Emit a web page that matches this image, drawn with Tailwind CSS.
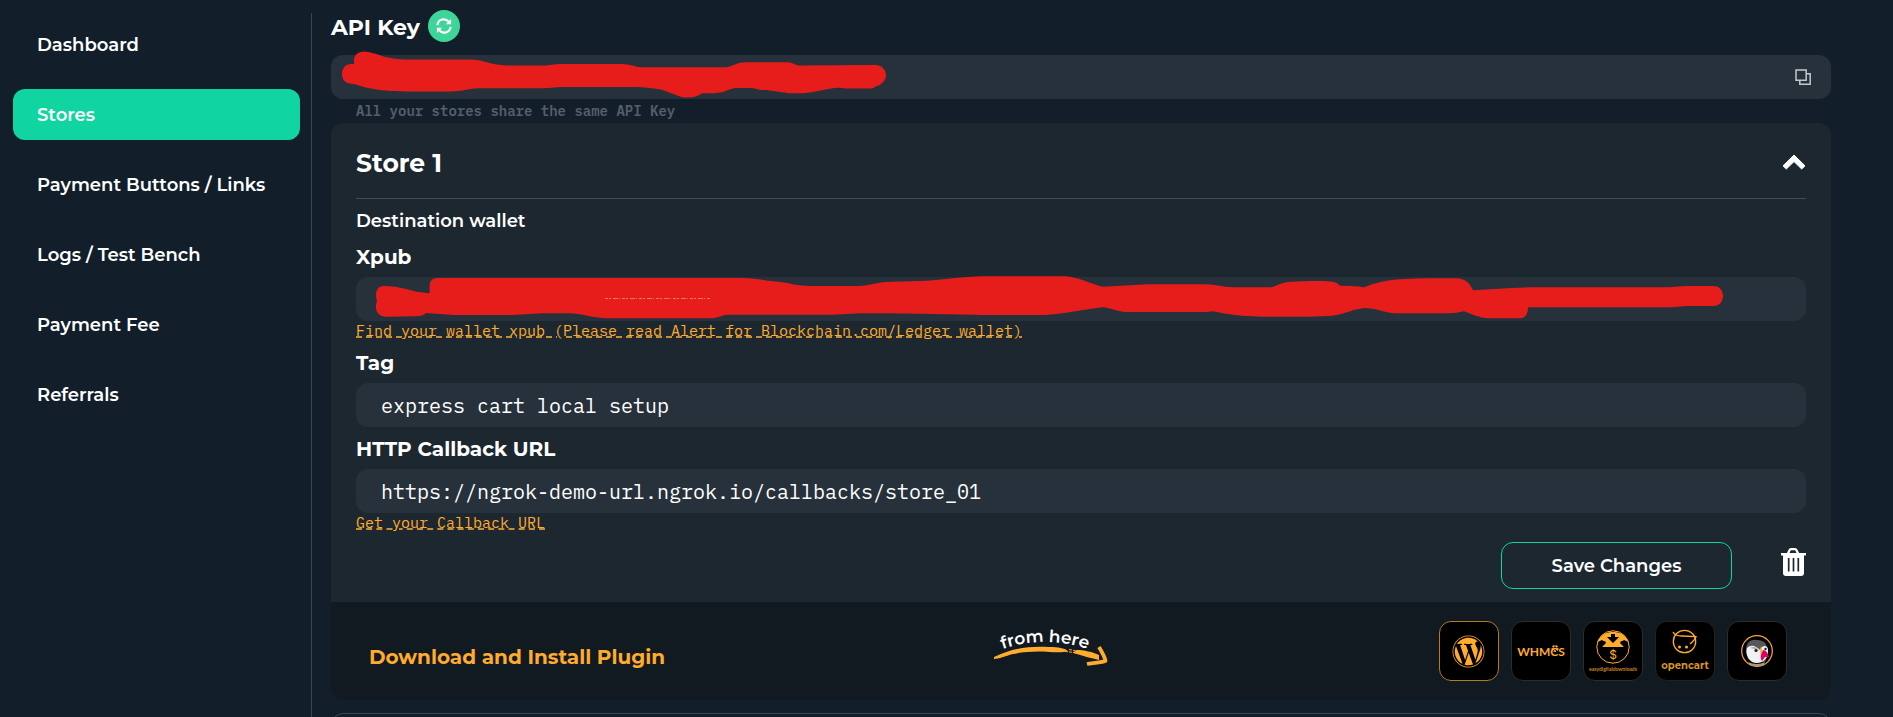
<!DOCTYPE html>
<html lang="en">
  <head>
    <meta charset="UTF-8" />
    <meta name="viewport" content="width=device-width, initial-scale=1.0" />
    <title>Stores</title>
    <script src="https://cdn.jsdelivr.net/npm/@tailwindcss/browser@4"></script>
  </head>
  <body class="flex h-screen overflow-hidden bg-[#121f2b] font-['Montserrat','Inter',sans-serif] text-white">
    <!-- Sidebar -->
    <aside class="mt-[13px] w-[312px] shrink-0 border-r border-[#3b4650] pt-1.5 pr-[11px] pl-[13px]">
      <nav class="flex flex-col gap-[19px] text-lg font-semibold">
        <a href="#" class="flex h-[51px] items-center rounded-xl px-6">Dashboard</a>
        <a href="#" class="flex h-[51px] items-center rounded-xl bg-[#10d5a0] px-6">Stores</a>
        <a href="#" class="flex h-[51px] items-center rounded-xl px-6">Payment Buttons / Links</a>
        <a href="#" class="flex h-[51px] items-center rounded-xl px-6">Logs / Test Bench</a>
        <a href="#" class="flex h-[51px] items-center rounded-xl px-6">Payment Fee</a>
        <a href="#" class="flex h-[51px] items-center rounded-xl px-6">Referrals</a>
      </nav>
    </aside>

    <main class="mr-[62px] ml-[19px] min-w-0 flex-1 pt-2.5">
      <!-- API key -->
      <div class="flex h-8 items-center gap-2">
        <label for="apiKey" class="pt-0.5 text-[22px] font-bold">API Key</label>
        <button type="button" aria-label="Regenerate API key" class="flex size-8 items-center justify-center rounded-full bg-[#3dd598]">
          <svg class="size-4" viewBox="0 0 18 18" fill="none" stroke="white" stroke-width="2.400">
            <path d="M1.500 8C2.500 1 10.500-.5 14.500 4.500M16.500 10C15.500 17 7.500 18.500 3.500 13.500" />
            <path d="M17 1v6h-6zM1 17v-6h6z" fill="white" stroke="none" />
          </svg>
        </button>
      </div>
      <div class="relative mt-[13px]">
        <input id="apiKey" type="text" readonly class="block h-11 w-full rounded-xl bg-[#27313b] px-[25px] font-['IBM_Plex_Mono','Liberation_Mono',monospace] text-xl" />
        <svg class="pointer-events-none absolute top-0 left-0 h-11 w-[600px] overflow-visible" viewBox="0 0 600 44" fill="#e71d1c">
          <path
            d="M11 19C11 13 15 9 20 9L23 9V5C23 0 27-3 33-3.500C45-3 52 4 73 4.500H142C152 5 160 10 176 10.500H215C225 9 228 9 235 9H290C300 9 304 12 310 12.300H394C402 12 404 7.500 415 7.300H455C462 7 463 10 468 10.500L544 10C551 10 555 15 555 20.500C555 25 550 31 545 31C543 34 540 33.500 535 33.500H515C500 30 490 38.300 465 38.300H460C440 36 437 35 430 35L421 33H404C398 34 392 38.300 382 38.300H371C364 44 352 43.500 345 40L330 34.500C320 33 312 32 305 32H235C222 32 218 33.300 209 33.300H147C137 34 130 36.500 120 36.500H75C45 36 32 32 25 29.500C20 28.500 11 29 11 19Z"
          />
        </svg>
        <button type="button" aria-label="Copy API key" class="absolute top-3.5 right-5">
          <svg class="size-4" viewBox="0 0 16 16" fill="none" stroke="#c3c8cc" stroke-width="1.500">
            <path d="M1 1h10.200v10.200H1zM11.200 4.800h4v10.400H4.800v-4" />
          </svg>
        </button>
      </div>
      <p class="h-6 pl-[25px] font-['IBM_Plex_Mono','Liberation_Mono',monospace] text-sm leading-6 font-semibold text-[#535f69]">All your stores share the same API Key</p>

      <!-- Store 1 -->
      <section class="overflow-hidden rounded-xl bg-[#1d2730]">
        <div class="px-[25px] pb-[13px]">
          <div class="flex h-[76px] items-center justify-between border-b border-[#434c54] pt-0.5">
            <h2 class="pt-1 text-[25px] font-bold">Store 1</h2>
            <button type="button" aria-label="Collapse store">
              <svg class="h-4 w-6" viewBox="0 0 24 16" fill="white" stroke="white" stroke-linejoin="round"><path d="M12 1l11 10.800-3.300 3.200L12 7.600 4.300 15 1 11.800z" /></svg>
            </button>
          </div>

          <h3 class="mt-2 text-lg leading-7 font-semibold">Destination wallet</h3>
          <label for="xpub" class="mt-2 mb-1.5 block text-xl leading-7 font-bold">Xpub</label>
          <div class="relative">
            <input id="xpub" type="text" class="block h-11 w-full rounded-xl bg-[#27313b] px-[25px] font-['IBM_Plex_Mono','Liberation_Mono',monospace] text-xl" />
            <svg class="pointer-events-none absolute top-0 left-0 h-11 w-[1400px] overflow-visible" viewBox="0 0 1400 44" fill="#e71d1c">
              <path
                d="M20 19C20 13 22 9 28 9C40 9 50 12 62 15L73.600 16.300V8Q74 1 82 1H386C400 1 410 4 424 5C435 6 440 9 455 9H498C515 9 520 5 535 4.700L566 4C590 3 605-.5 629-.7H709C722 0 732 6 746.500 9.700L792 7.300H849C860 7.500 867 10 877 10.300H914C920 10 924 5 936 4.700C950 4 978 3 981 6.300L984 8.700C996 9 1000 9 1008.500 10.300C1020 5 1030 4 1040 2.500C1060 1 1080 1 1099 1.300C1110 1 1114 7 1117 13.300L1155 11L1174 10.300H1313L1330 9H1357C1364 9 1367 14 1367 19S1364 29 1357 29H1330L1316 30.300H1172C1172 36 1170 41.300 1164 41.300H1134C1122 41 1116 37 1108 34.300C1100 36.500 1092 36.300 1088 36.300H1040C1028 36 1020 31 1008.500 31C992 33 986 39 971 39C950 40 925 40 906 39.700C880 39 870 37 857.500 34.300L850 35H769C760 34 755 31 746.500 30.300C725 33 715 36 690 38H642C600 38 560 36.300 504 36.300L477 37.700H372C365 38 362 41.300 354 41.300H250C232 40 225 36.500 214 36.300H187L156 38H98L70 36Q67 39.300 60 39.300L32 39.700C24 40 20 36 20 30C20 27 20 26 21 24.700Z"
              />
              <path d="M249 21.500h106" stroke="#e9756f" stroke-dasharray="3 1 2 2 5 1 1 2" />
            </svg>
          </div>
          <div class="mb-2 h-5 font-['IBM_Plex_Mono','Liberation_Mono',monospace] text-[15px] leading-5 text-[#ffab2e]">
            <a href="#" class="underline decoration-[#c88c34] decoration-dashed decoration-2 underline-offset-0">Find your wallet xpub (Please read Alert for Blockchain.com/Ledger wallet)</a>
          </div>

          <label for="tag" class="mb-1.5 block text-xl leading-7 font-bold">Tag</label>
          <input id="tag" type="text" value="express cart local setup" class="block h-11 w-full rounded-xl bg-[#27313b] px-[25px] font-['IBM_Plex_Mono','Liberation_Mono',monospace] text-xl" />

          <label for="callbackUrl" class="mt-2 mb-1.5 block text-xl leading-7 font-bold">HTTP Callback URL</label>
          <input
            id="callbackUrl"
            type="text"
            value="https://ngrok-demo-url.ngrok.io/callbacks/store_01"
            class="block h-11 w-full rounded-xl bg-[#27313b] px-[25px] font-['IBM_Plex_Mono','Liberation_Mono',monospace] text-xl"
          />
          <div class="h-5 font-['IBM_Plex_Mono','Liberation_Mono',monospace] text-[15px] leading-5 text-[#ffab2e]">
            <a href="#" class="underline decoration-[#c88c34] decoration-dashed decoration-2 underline-offset-0">Get your Callback URL</a>
          </div>

          <div class="mt-[9px] flex justify-end gap-12">
            <button type="button" class="h-[47px] w-[231px] rounded-xl border border-[#10d5a0] text-lg font-semibold">Save Changes</button>
            <button type="button" aria-label="Delete store" class="mt-1.5 self-start">
              <svg class="h-7 w-[26px]" viewBox="0 0 26 28">
                <path d="M8 5.500l1.500-3.300Q10 1.200 11 1.200h4q1 0 1.500 1L18 5.500" fill="none" stroke="white" stroke-width="2.300" />
                <path d="M1 5h25v2.500h-2V25q0 3-3 3h-15q-3 0-3-3V7.500H1z" fill="white" />
                <path d="M8.700 10v13.500M13.500 10v13.500M18.300 10v13.500" fill="none" stroke="#1d2730" stroke-width="1.700" />
              </svg>
            </button>
          </div>
        </div>

        <!-- Plugins -->
        <div class="flex h-[98px] items-center justify-between bg-[#111921] pr-11 pl-[38px]">
          <p class="pt-3 text-xl font-bold text-[#ffab2e]">Download and Install Plugin</p>
          <svg class="h-10 w-[116px] overflow-visible" viewBox="0 0 116 40" fill="none">
            <path id="arc" d="M0 21Q51 1 102 21" />
            <text fill="white" class="font-['Montserrat','Inter',sans-serif] text-[17px] font-semibold"><textPath href="#arc" startOffset="50%" text-anchor="middle">from here</textPath></text>
            <path d="M0 26C21 16 39 15 55 16C65 16 70 17 74 20C69 22 61 21 55 21C43 20 29 21 19 23C11 25 5 28 0 28Z" fill="#ffab2e" />
            <path d="M71 20.500l10 1M75 18.500l6 1" stroke="#ffab2e" stroke-dasharray="3 1" />
            <path d="M82 19C90 19 99 21 105 24V29C97 27 89 25 79 22Z" fill="#ffab2e" />
            <path d="M105 16C108 21 111 26 111.500 30C105 32 98 32 93 33" stroke="#ffab2e" stroke-width="3.800" stroke-linejoin="round" />
          </svg>

          <div class="flex gap-3">
            <button type="button" aria-label="WordPress" class="flex size-[60px] items-center justify-center rounded-xl border border-[#b57a24] bg-black">
              <svg class="size-[33px]" viewBox="0 0 512 512" fill="#ffab2e">
                <path
                  d="M61.700 169.400l101.500 278C92.200 413 43.300 340.200 43.300 256c0-30.900 6.600-60.100 18.400-86.600zm337.900 75.900c0-26.300-9.400-44.500-17.500-58.700-10.800-17.500-20.900-32.400-20.900-49.900 0-19.600 14.800-37.800 35.700-37.800.9 0 1.800.1 2.800.2-37.900-34.700-88.300-55.900-143.700-55.900-74.300 0-139.700 38.100-177.800 95.900 5 .2 9.700.3 13.700.3 22.200 0 56.700-2.700 56.700-2.700 11.500-.7 12.800 16.200 1.400 17.500 0 0-11.500 1.300-24.300 2l77.500 230.400L249.800 247l-33.100-90.800c-11.500-.7-22.300-2-22.300-2-11.500-.7-10.100-18.200 1.300-17.500 0 0 35.100 2.700 56 2.700 22.200 0 56.700-2.700 56.700-2.700 11.500-.7 12.800 16.200 1.400 17.500 0 0-11.500 1.300-24.300 2l76.900 228.700 21.200-70.900c9-29.400 16-50.500 16-68.700zm-139.900 29.300l-63.800 185.500c19.100 5.600 39.200 8.700 60.100 8.700 24.800 0 48.500-4.300 70.600-12.100-.6-.9-1.100-1.900-1.500-2.900l-65.400-179.200zm183-120.700c.9 6.800 1.400 14 1.400 21.900 0 21.600-4 45.800-16.200 76.200l-65 187.900C426.200 403 468.700 334.400 468.700 256c0-37-9.400-71.800-26-102.100zM504 256c0 136.800-111.300 248-248 248C119.200 504 8 392.700 8 256 8 119.200 119.200 8 256 8c136.700 0 248 111.200 248 248zm-11.400 0c0-130.500-106.200-236.600-236.600-236.600C125.500 19.400 19.400 125.500 19.400 256S125.600 492.600 256 492.600c130.500 0 236.600-106.100 236.600-236.600z"
                />
              </svg>
            </button>
            <button type="button" aria-label="WHMCS" class="flex size-[60px] items-center justify-center rounded-xl border border-[#2b2c2e] bg-black">
              <svg class="size-[58px]" viewBox="0 0 58 58">
                <text x="29" y="34" text-anchor="middle" fill="#ffab2e" class="font-['Lato',sans-serif] text-[12px] font-bold">WHMCS</text>
                <circle cx="43" cy="26.500" r="2.500" fill="none" stroke="#ffab2e" stroke-width="2" stroke-dasharray="2 1" />
              </svg>
            </button>
            <button type="button" aria-label="Easy Digital Downloads" class="flex size-[60px] items-center justify-center rounded-xl border border-[#2b2c2e] bg-black">
              <svg class="size-[58px]" viewBox="0 0 58 58">
                <circle cx="29" cy="25" r="16.200" fill="none" stroke="#ffab2e" stroke-width="1" />
                <path d="M13.500 20C17 12 23 10 29 10S41 12 44.500 20L40 18 37 20 40 25H18L21 20 18 18Z" fill="#ffab2e" />
                <path d="M27 12h4v3h4l-6 6-6-6h4zM18 20l3-1 1 2-4 4zM40 20l-3-1-1 2 4 4z" fill="black" />
                <text x="29" y="37" text-anchor="middle" fill="#ffab2e" class="font-['Inter',sans-serif] text-[12px]">$</text>
                <text x="29" y="49" text-anchor="middle" fill="#c98628" class="font-['Lato',sans-serif] text-[5px] font-bold">easydigitaldownloads</text>
              </svg>
            </button>
            <button type="button" aria-label="OpenCart" class="flex size-[60px] items-center justify-center rounded-xl border border-[#202123] bg-black">
              <svg class="size-[58px]" viewBox="0 0 58 58">
                <g fill="none" stroke="#ffab2e" stroke-width="1.300">
                  <circle cx="28.500" cy="19.500" r="11.200" />
                  <path d="M17 10Q19 14 26 14L40 14.500Q39 18 34 22" />
                </g>
                <circle cx="23.500" cy="25" r="1.500" fill="#ffab2e" />
                <circle cx="30.500" cy="25" r="1.500" fill="#ffab2e" />
                <text x="29" y="47" text-anchor="middle" fill="#d99229" class="font-['Montserrat','Lato',sans-serif] text-[10px] font-bold">opencart</text>
              </svg>
            </button>
            <button type="button" aria-label="PrestaShop" class="flex size-[60px] items-center justify-center rounded-xl border border-[#2b2c2e] bg-black">
              <svg class="size-[58px]" viewBox="0 0 58 58">
                <circle cx="29" cy="29" r="15.300" fill="none" stroke="#ffab2e" stroke-width="1.200" />
                <path d="M18 31C17 20 23 17 29 18C37 18 41 24 40 32L37 40H24Z" fill="#56595b" />
                <path d="M19 26C23 22 28 24 32 28C34 24 38 22 40 27L40 33C38 37 35 41 29 41C21 41 17 33 19 26Z" fill="#f1f1f1" />
                <path d="M22 26Q28 23 31 29L27 27Z" fill="#a5a7a8" />
                <circle cx="28" cy="28.500" r="1.600" fill="#222" />
                <circle cx="37.500" cy="27" r="1.200" fill="#222" />
                <path d="M33 24Q35 29 33 34L34 39Q31 31 33 24Z" fill="#ffab2e" />
                <path d="M35 28Q39 28 41 35L37 35L34 39Q31 36 35 28Z" fill="#df0067" />
                <path d="M20 40Q29 44 37 40L36 43Q29 46 22 43Z" fill="#a89a80" />
              </svg>
            </button>
          </div>
        </div>
      </section>

      <!-- Next store -->
      <section class="mt-[13px] h-20 rounded-xl border border-[#3b4650]"></section>
    </main>
  </body>
</html>
